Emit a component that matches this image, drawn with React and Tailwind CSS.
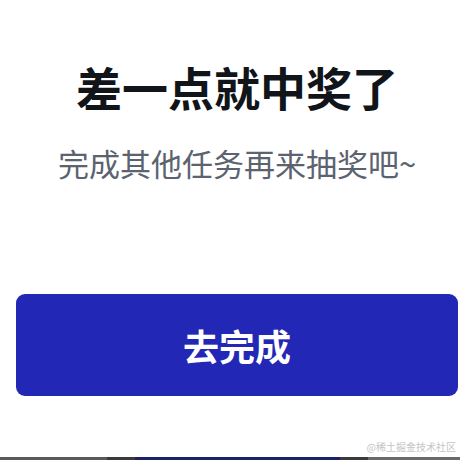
import React from 'react';

const App = () => {
  return (
    <div
      className="relative w-[460px] h-[460px] overflow-hidden bg-white"
      style={{ fontFamily: '"Noto Sans CJK SC", "Noto Sans", sans-serif' }}
    >
      <div className="w-[474px] flex flex-col items-center">
        {/* Heading */}
        <h1 className="mt-[57px] text-[46px] leading-[58px] font-bold text-[#111418]">
          差一点就中奖了
        </h1>
        <p className="mt-[28px] text-[31px] leading-[40px] text-[#5c6370]">
          完成其他任务再来抽奖吧~
        </p>

        {/* Action */}
        <div className="w-full px-4 mt-[111px]">
          <button className="w-full h-[102px] rounded-[9px] bg-[#2327b5] text-white text-[36px] font-bold">
            去完成
          </button>
        </div>
      </div>

      {/* Watermark */}
      <span className="absolute right-[4px] bottom-[6px] text-[10px] text-[#c4c4c4]">
        @稀土掘金技术社区
      </span>

      {/* Cropped bar at the bottom edge */}
      <div className="absolute left-0 bottom-0 w-full h-[3px] flex">
        <div className="w-[107px] bg-[#5a5a5a]" />
        <div className="w-[28px] bg-[#3a3a3a]" />
        <div className="w-[205px] bg-[#1e2260]" />
        <div className="w-[28px] bg-[#3a3a3a]" />
        <div className="flex-1 bg-[#6a6a6a]" />
      </div>
    </div>
  );
};

export default App;
